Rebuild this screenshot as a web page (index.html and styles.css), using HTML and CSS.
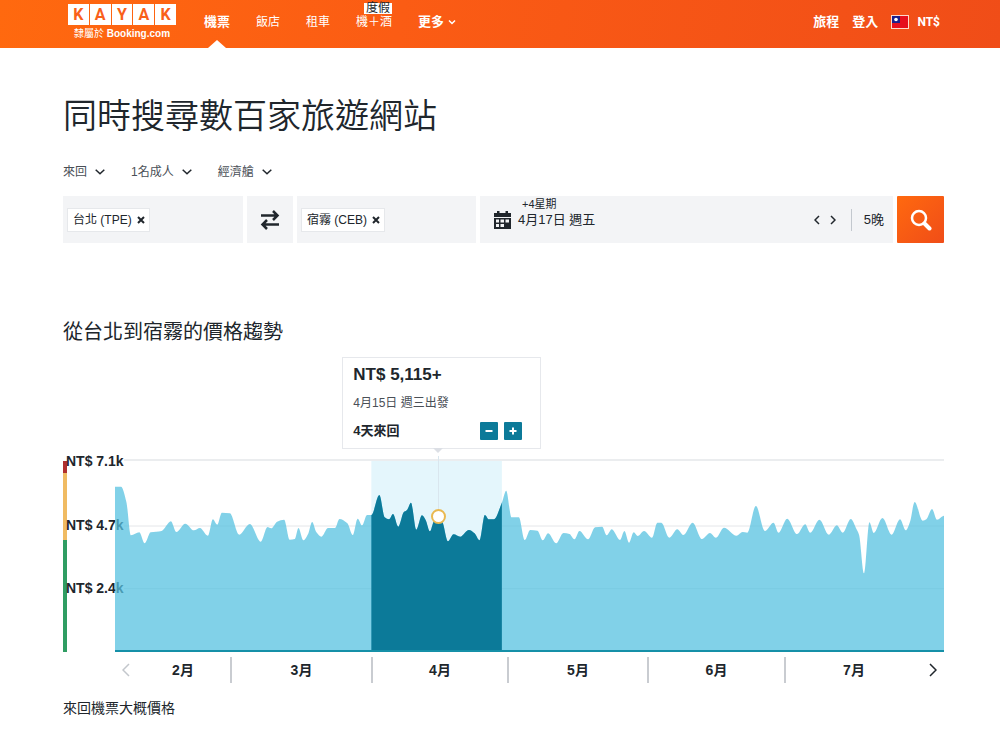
FILE: index.html
```html
<!DOCTYPE html>
<html lang="zh-Hant">
<head>
<meta charset="utf-8">
<title>KAYAK 機票</title>
<link rel="stylesheet" href="styles.css">
</head>
<body>
<header class="topbar">
  <a class="brand" href="#">
    <span class="logo"><span>K</span><span>A</span><span>Y</span><span>A</span><span>K</span></span>
    <span class="tagline">隸屬於 <b>Booking.com</b></span>
  </a>
  <nav class="nav">
    <a class="nav-link active" href="#">機票</a>
    <a class="nav-link" href="#">飯店</a>
    <a class="nav-link" href="#">租車</a>
    <a class="nav-link" href="#">機＋酒<span class="badge">度假</span></a>
    <button class="nav-link strong" type="button">更多<svg class="caret-small" viewBox="0 0 8 6"><path d="M1 1.5 4 4.5 7 1.5"/></svg></button>
  </nav>
  <div class="account">
    <a class="nav-link strong" href="#">旅程</a>
    <a class="nav-link strong" href="#">登入</a>
    <button class="nav-link strong currency" type="button">
      <svg class="flag" viewBox="0 0 18 14"><rect width="18" height="14" fill="#ffd9cc"/><rect x="1" y="1" width="16" height="12" fill="#e60f1e"/><rect x="1" y="1" width="8" height="7" fill="#1a1f8c"/><circle cx="5" cy="4.500" r="1.800" fill="#fff"/></svg>
      NT$
    </button>
  </div>
</header>

<main class="page">
  <h1 class="title">同時搜尋數百家旅遊網站</h1>

  <form class="search">
    <div class="options">
      <button class="option" type="button">來回<svg class="caret" viewBox="0 0 10 6"><path d="M.7.8 5 4.800 9.300.8"/></svg></button>
      <button class="option" type="button">1名成人<svg class="caret" viewBox="0 0 10 6"><path d="M.7.8 5 4.800 9.300.8"/></svg></button>
      <button class="option" type="button">經濟艙<svg class="caret" viewBox="0 0 10 6"><path d="M.7.8 5 4.800 9.300.8"/></svg></button>
    </div>
    <div class="fields">
      <div class="field place">
        <span class="chip">台北 (TPE)<button class="remove" type="button" aria-label="移除台北"><svg viewBox="0 0 8 8"><path d="M1 1 7 7M7 1 1 7"/></svg></button></span>
        <input class="place-input" type="text" aria-label="出發地">
      </div>
      <button class="field swap" type="button" aria-label="對調">
        <svg viewBox="0 0 20 20"><path d="M1 5.500H17M13 1 17.500 5.500 13 10M19 14.500H3M7 10 2.500 14.500 7 19"/></svg>
      </button>
      <div class="field place">
        <span class="chip">宿霧 (CEB)<button class="remove" type="button" aria-label="移除宿霧"><svg viewBox="0 0 8 8"><path d="M1 1 7 7M7 1 1 7"/></svg></button></span>
        <input class="place-input" type="text" aria-label="目的地">
      </div>
      <div class="field dates">
        <svg class="calendar" viewBox="0 0 17 18"><path fill="#20262c" d="M3 0h2.500v2h6V0H14v2h3v4H0V2h3zM0 7h17v11H0z"/><path fill="#f3f4f6" d="M2 8.500h3v3H2zM6.500 8.500h3.500v3H6.500zM11.500 8.500h3.500v3h-3.500zM2 13h3v3H2zM6.500 13h3.500v3H6.500z"/></svg>
        <button class="date" type="button"><span class="flex-note">+4星期</span>4月17日 週五</button>
        <button class="step" type="button" aria-label="前一天"><svg viewBox="0 0 6 10"><path d="M5 1 1 5 5 9"/></svg></button>
        <button class="step" type="button" aria-label="後一天"><svg viewBox="0 0 6 10"><path d="M1 1 5 5 1 9"/></svg></button>
        <span class="nights">5晚</span>
      </div>
      <button class="submit" type="submit" aria-label="搜尋">
        <svg viewBox="0 0 22 22"><circle cx="9" cy="9" r="7" stroke-width="2.500"/><path d="M14.500 14.500 19.500 19.500" stroke-width="4"/></svg>
      </button>
    </div>
  </form>

  <section class="trend">
    <h2 class="subtitle">從台北到宿霧的價格趨勢</h2>
    <div class="chart">
      <div class="scale"><i class="high"></i><i class="mid"></i><i class="low"></i></div>
      <div class="labels"><span>NT$ 7.1k</span><span>NT$ 4.7k</span><span>NT$ 2.4k</span></div>
      <div class="plot">
        <svg class="graph" viewBox="0 0 2490 576" preserveAspectRatio="none">
          <defs><clipPath id="month"><rect x="770" y="0" width="392" height="576"/></clipPath></defs>
          <path class="gridline top" d="M27 0H2490"/>
          <rect class="band" x="770" y="3" width="392" height="573"/>
          <path class="gridline" d="M27 198H770M1162 198H2490M27 386H2490"/>
          <path class="area" id="area"/>
          <path class="area-selected" id="area-selected" clip-path="url(#month)"/>
          <path class="axis" d="M0 573H2490"/>
        </svg>
        <span class="guide"></span>
        <span class="marker"></span>
        <div class="tip">
          <strong class="price">NT$ 5,115+</strong>
          <span class="depart">4月15日 週三出發</span>
          <div class="stay">
            <b>4天來回</b>
            <button class="adjust" type="button" aria-label="減少天數"><svg viewBox="0 0 8 8"><path d="M.5 4h7"/></svg></button>
            <button class="adjust" type="button" aria-label="增加天數"><svg viewBox="0 0 8 8"><path d="M.5 4h7M4 .5v7"/></svg></button>
          </div>
        </div>
      </div>
    </div>
    <div class="months">
      <button class="page-arrow muted" type="button" aria-label="上一頁"><svg viewBox="0 0 8 14"><path d="M7 1 1 7 7 13"/></svg></button>
      <span>2月</span><span>3月</span><span>4月</span><span>5月</span><span>6月</span><span>7月</span>
      <button class="page-arrow" type="button" aria-label="下一頁"><svg viewBox="0 0 8 14"><path d="M1 1 7 7 1 13"/></svg></button>
    </div>
    <p class="note">來回機票大概價格</p>
  </section>
</main>
<script src="chart.js"></script>
</body>
</html>
```
FILE: styles.css
```css
* { box-sizing: border-box; }

body {
  margin: 0;
  background: #fff;
  color: #20262c;
  font-family: "Liberation Sans", "Noto Sans CJK TC", sans-serif;
  font-size: 12px;
  line-height: 16px;
}

button {
  margin: 0;
  padding: 0;
  border: 0;
  background: none;
  color: inherit;
  font: inherit;
}

a { color: inherit; text-decoration: none; }

svg { display: block; fill: none; }

/* Header */
.topbar {
  display: flex;
  height: 48px;
  padding: 0 60px 0 68px;
  color: #fff;
  background: linear-gradient(100deg, #ff690f, #fb5c14 40%, #f04d18);
}

.brand { width: 108px; padding-top: 4px; }

.logo { display: flex; gap: 1px; }

.logo span {
  flex: 1;
  background: #fff;
  color: #f9601a;
  font: bold 16px/21px Roboto, sans-serif;
  text-align: center;
}

.tagline {
  display: block;
  padding-top: 1px;
  font-size: 10px;
  text-align: center;
  white-space: nowrap;
}

.nav { display: flex; gap: 26px; margin-left: 28px; }

.nav-link {
  position: relative;
  display: flex;
  align-items: center;
  height: 44px;
  white-space: nowrap;
}

.strong, .active { font-size: 13px; font-weight: bold; }

.active::after {
  content: "";
  position: absolute;
  top: 40px;
  left: 50%;
  margin-left: -9px;
  border: solid transparent;
  border-width: 0 9px 8px;
  border-bottom-color: #fff;
}

.badge {
  position: absolute;
  top: 3px;
  right: 0;
  width: 28px;
  background: #fff;
  color: #20262c;
  font-size: 12px;
  line-height: 11px;
  text-align: center;
}

.caret-small { width: 8px; height: 6px; margin-left: 4px; stroke: #fff; stroke-width: 1.5; }

.account { display: flex; gap: 13px; margin-left: auto; }

.currency { gap: 8px; font-size: 12px; font-family: Roboto, sans-serif; }

.flag { width: 18px; height: 14px; }

/* Search form */
.page { padding: 0 56px 0 63px; }

.title {
  margin: 46px 0 26px;
  font-size: 34px;
  font-weight: 350;
  line-height: 44px;
}

.options { display: flex; gap: 26px; margin-bottom: 16px; }

.option { display: flex; align-items: center; gap: 8px; color: #4a5057; }

.caret { width: 10px; height: 6px; stroke: #20262c; stroke-width: 1.5; }

.fields {
  display: grid;
  grid-template-columns: minmax(0, 180fr) 46px minmax(0, 179fr) minmax(0, 413fr) 47px;
  gap: 4px;
  height: 47px;
}

.field { display: flex; align-items: center; background: #f3f4f6; }

.place { padding-left: 4px; }

.chip {
  display: flex;
  align-items: center;
  gap: 5px;
  height: 24px;
  padding: 0 4px 0 5px;
  border: 1px solid #e6e8eb;
  background: #fff;
  white-space: nowrap;
}

.remove svg { width: 8px; height: 8px; stroke: #20262c; stroke-width: 2; }

.place-input { flex: 1; min-width: 0; border: 0; background: none; }

.swap { justify-content: center; }

.swap svg { width: 20px; height: 20px; stroke: #20262c; stroke-width: 2.5; }

.dates { gap: 10px; padding: 0 9px 0 14px; font-size: 13px; }

.calendar { width: 17px; height: 18px; }

.date {
  position: relative;
  margin-left: -3px;
  margin-right: auto;
  white-space: nowrap;
}

.flex-note {
  position: absolute;
  bottom: 16px;
  left: 4px;
  font-size: 11px;
}

.step svg { width: 6px; height: 10px; stroke: #20262c; stroke-width: 1.5; }

.nights {
  margin-left: 5px;
  padding-left: 12px;
  border-left: 1px solid #c3c8ce;
  line-height: 22px;
}

.submit {
  display: grid;
  place-items: center;
  border-radius: 1px;
  background: linear-gradient(135deg, #ff690f, #f04d18);
}

.submit svg { width: 22px; height: 22px; stroke: #fff; stroke-linecap: round; }

/* Price trend */
.subtitle {
  margin: 75px 0 107px;
  font-size: 20px;
  font-weight: 400;
  line-height: 28px;
}

.chart { display: flex; height: 199px; }

.scale {
  display: flex;
  flex-direction: column;
  width: 4px;
  margin-top: 8px;
}

.high { flex: 12; background: #b0302f; }
.mid { flex: 67; background: #f0bb63; }
.low { flex: 111; background: #2f9d63; }

.labels {
  display: flex;
  flex-direction: column;
  justify-content: space-between;
  width: 49px;
  height: 143px;
  margin-left: -1px;
  font-size: 14px;
  font-weight: bold;
  white-space: nowrap;
}

.plot { position: relative; flex: 1; margin-top: 7px; }

.graph { width: 100%; height: 100%; overflow: visible; }

.gridline { stroke: #e4e6e9; vector-effect: non-scaling-stroke; }
.top { stroke: #ebedef; stroke-width: 2; }
.band { fill: #e4f6fc; }
.area { fill: #57c2e0; fill-opacity: .75; }
.area-selected { fill: #0c7a99; }
.axis { stroke: #1590a8; stroke-width: 2; vector-effect: non-scaling-stroke; }

.guide {
  position: absolute;
  left: 39%;
  top: -4px;
  height: 54px;
  border-left: 1px solid #d9e6ee;
}

.marker {
  position: absolute;
  left: 39%;
  top: 56px;
  width: 15px;
  height: 15px;
  margin: -7px;
  border: 2px solid #eab951;
  border-radius: 50%;
  background: #fff;
}

.tip {
  position: absolute;
  left: 39%;
  bottom: 100%;
  display: grid;
  gap: 11px;
  width: 199px;
  margin: 0 0 11px -96px;
  padding: 8px 18px 8px 10px;
  border: 1px solid #e6e8ec;
  background: #fff;
}

.tip::after {
  content: "";
  position: absolute;
  top: 100%;
  left: 90px;
  border: solid transparent;
  border-width: 5px 5px 0;
  border-top-color: #dcdfe5;
}

.price { font-size: 17px; line-height: 18px; }

.depart { color: #4a5057; }

.stay { display: flex; align-items: center; gap: 6px; font-size: 13px; }

.stay b { margin-right: auto; }

.adjust {
  display: grid;
  place-items: center;
  width: 18px;
  height: 18px;
  border-radius: 1px;
  background: #0c7a99;
}

.adjust svg { width: 8px; height: 8px; stroke: #fff; stroke-width: 2; }

.months {
  display: grid;
  grid-template-columns: 21px 94fr 141fr 136fr 140fr 137fr 138fr 22px;
  margin: 5px 0 0 52px;
  font-size: 14px;
  font-weight: bold;
  line-height: 26px;
  text-align: center;
}

.months span + span { border-left: 2px solid #c9ccd1; }

.page-arrow { display: grid; place-items: center; }

.page-arrow svg { width: 8px; height: 14px; stroke: #20262c; stroke-width: 1.5; }

.muted svg { stroke: #c3c7cc; }

.note { margin: 15px 0 10px; font-size: 14px; line-height: 20px; }
```
FILE: chart.js
```js
// Lowest fares by departure date, in graph units (y grows downwards).
const points = [
  [0,80],[18,80],[34,125],[48,226],[73,217],[89,250],[107,217],[140,213],[168,184],[184,216],
  [211,191],[237,211],[255,204],[279,227],[294,178],[307,194],[321,158],[345,160],[373,224],[405,192],
  [438,245],[458,201],[469,205],[487,185],[508,179],[525,239],[540,237],[551,204],[566,241],[580,222],
  [592,186],[605,217],[620,230],[640,204],[661,204],[674,177],[698,190],[714,225],[729,176],[742,196],
  [757,165],[770,165],[794,105],[810,172],[823,178],[835,162],[851,200],[867,157],[877,150],[889,128],
  [905,209],[922,166],[933,180],[946,214],[957,185],[973,165],[985,190],[1000,244],[1017,223],[1037,230],
  [1063,210],[1080,220],[1095,241],[1111,165],[1123,178],[1138,178],[1162,128],[1175,92],[1191,172],[1213,172],
  [1231,240],[1247,210],[1269,212],[1285,241],[1301,220],[1325,250],[1347,219],[1365,222],[1380,238],[1395,213],
  [1421,238],[1442,202],[1463,200],[1477,226],[1492,208],[1517,240],[1530,213],[1544,248],[1558,217],[1570,228],
  [1589,213],[1613,233],[1629,188],[1641,188],[1665,233],[1689,208],[1707,225],[1735,188],[1763,237],[1787,219],
  [1805,233],[1829,203],[1867,227],[1885,216],[1899,218],[1925,138],[1952,213],[1978,188],[1993,218],[2019,176],
  [2049,222],[2073,193],[2088,218],[2116,179],[2144,224],[2168,196],[2186,218],[2210,177],[2227,207],[2235,225],
  [2250,340],[2266,187],[2279,219],[2305,174],[2333,224],[2358,178],[2375,211],[2388,185],[2402,126],[2426,182],
  [2437,178],[2454,147],[2469,179],[2490,167]
];

// Monotone cubic interpolation keeps peaks at the data points.
const slope = (i) => (points[i + 1][1] - points[i][1]) / (points[i + 1][0] - points[i][0]);
const tangents = points.map((p, i) => {
  if (i === 0 || i === points.length - 1) return 0;
  const a = slope(i - 1), b = slope(i);
  return a * b <= 0 ? 0 : 2 * a * b / (a + b);
});

let path = `M0 576L${points[0]}`;
for (let i = 1; i < points.length; i++) {
  const [x0, y0] = points[i - 1], [x1, y1] = points[i];
  const h = (x1 - x0) / 3;
  path += `C${x0 + h} ${y0 + tangents[i - 1] * h} ${x1 - h} ${y1 - tangents[i] * h} ${x1} ${y1}`;
}
path += "V576Z";

document.getElementById("area").setAttribute("d", path);
document.getElementById("area-selected").setAttribute("d", path);
```
